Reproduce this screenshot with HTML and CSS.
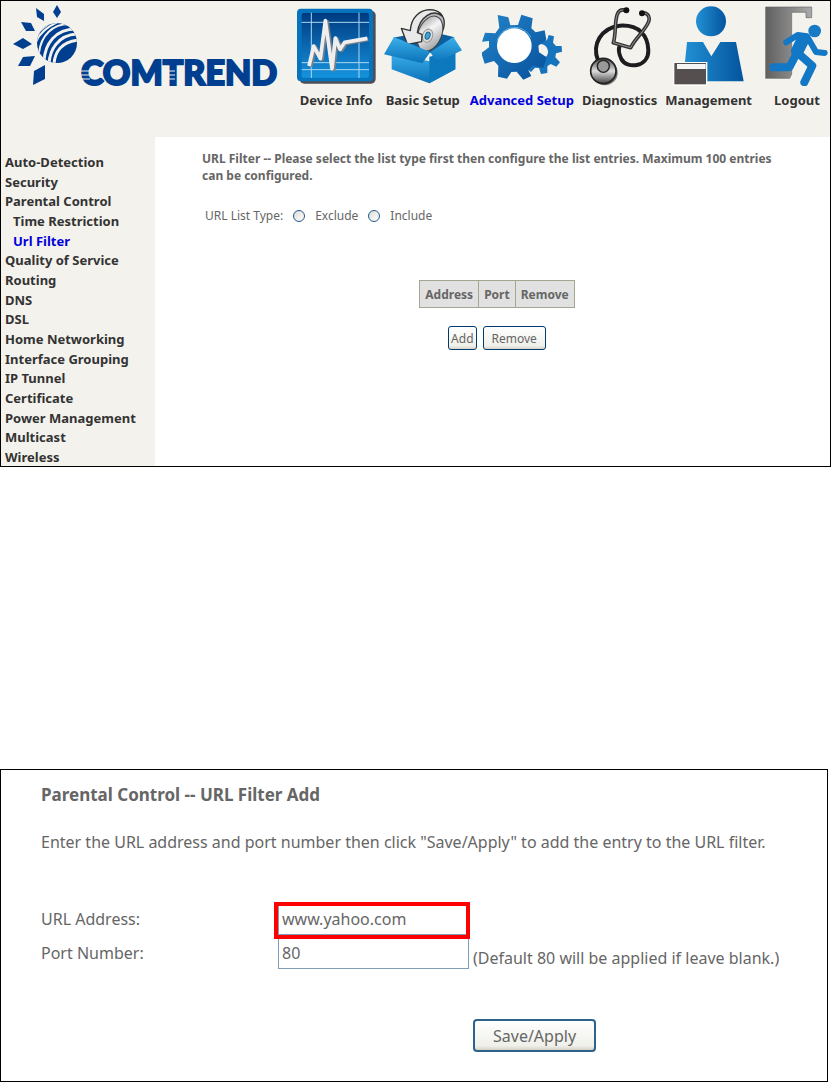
FILE: index.html
```html
<!DOCTYPE html>
<html lang="en">
<head>
    <meta charset="UTF-8">
    <meta name="viewport" content="width=device-width, initial-scale=1.0">
    <title>Comtrend - URL Filter</title>
    <link rel="stylesheet" href="styles.css">
</head>
<body>
    <div class="router">
        <header>
            <svg class="logo" viewBox="0 1 280 92" role="img" aria-label="Comtrend">
                <defs>
                    <clipPath id="globe"><circle cx="56" cy="43" r="20"/></clipPath>
                </defs>
                <g fill="#003f8f">
                    <path d="M56 5l4 7-4 6-4-6zM35 8l8 6v7l-7-4zM20 22l10 1 4 8-9 0zM12 44l10-6 9 6-9 5zM22 57l12-1-5 10H17zM33 71l11-6v14l-12 6z"/>
                    <circle cx="56" cy="43" r="20"/>
                </g>
                <g clip-path="url(#globe)" fill="none" stroke="#f4f2ed">
                    <path stroke-width="3" d="M53 66C53 52 61 41 78 40"/>
                    <path stroke-width="3" d="M48 66C48 50 57 35 76 34"/>
                    <path stroke-width="3" d="M43 61C44 44 54 29 75 29"/>
                    <path stroke-width="2" d="M38 53C40 35 52 24 68 24"/>
                    <path stroke-width="2" d="M35 42C39 32 47 26 59 21"/>
                    <path stroke-width="2" d="M34 35Q42 28 50 22"/>
                </g>
                <text class="logo-text" x="80" y="85">COMTREND</text>
                <path stroke="#f4f2ed" stroke-width="1" d="M79 71h10M79 75h10M79 79h10M167 71h7M167 75h7M167 79h7"/>
            </svg>

            <nav>
                <a href="#">
                    <svg width="79" height="80" viewBox="24 18 237 240" aria-hidden="true">
                        <defs>
                            <linearGradient id="panel" x2="0" y2="1">
                                <stop offset="0" stop-color="#003a80"/>
                                <stop offset="1" stop-color="#1593dd"/>
                            </linearGradient>
                        </defs>
                        <rect x="32" y="32" width="228" height="219" rx="14" fill="#4b4f58"/>
                        <rect x="24" y="26" width="228" height="218" rx="12" fill="#0873bd"/>
                        <rect x="38" y="39" width="202" height="194" rx="6" fill="url(#panel)"/>
                        <path stroke="#a9d8f4" stroke-width="3" d="M67 38v196M210 38v196M38 67h202M38 188h202M38 209h202"/>
                        <path fill="none" stroke="#7b8086" stroke-width="11" stroke-linejoin="round" d="M65 201l14-60 20 38 15-114 20 144 10-92 14 34 14-21 66-12"/>
                        <path fill="none" stroke="#eeeeef" stroke-width="11" stroke-linejoin="round" d="M60 198l14-60 20 38 15-114 20 144 10-92 14 34 14-21 68-12"/>
                    </svg>
                    Device Info
                </a>
                <a href="#">
                    <svg width="78" height="80" viewBox="276 18 234 240" aria-hidden="true">
                        <defs>
                            <linearGradient id="box" x2="0" y2="1">
                                <stop offset="0" stop-color="#3cb0ea"/>
                                <stop offset="1" stop-color="#0971b8"/>
                            </linearGradient>
                            <linearGradient id="disc" x2="1" y2="1">
                                <stop offset="0" stop-color="#8f9093"/>
                                <stop offset="0.4" stop-color="#f5f5f5"/>
                                <stop offset="1" stop-color="#8b8c90"/>
                            </linearGradient>
                        </defs>
                        <path fill="#0b5f9f" d="M303 113l107-20 78 19-73 48z"/>
                        <path fill="#b9babd" stroke="#333" stroke-width="4" d="M370 66C380 38 405 25 428 31 458 40 462 68 452 92L420 110 366 90z"/>
                        <ellipse cx="414" cy="101" rx="35" ry="55" fill="url(#disc)" stroke="#444" stroke-width="3" transform="rotate(22 414 101)"/>
                        <ellipse cx="407" cy="107" rx="15" ry="20" fill="#ddd" stroke="#999" stroke-width="3" transform="rotate(18 407 107)"/>
                        <ellipse cx="407" cy="107" rx="7" ry="11" fill="#3aa6dc" stroke="#1e5f8a" stroke-width="3" transform="rotate(18 407 107)"/>
                        <path fill="#e9e9ea" stroke="#333" stroke-width="4" stroke-linejoin="round" d="M450 48C424 26 383 48 376 98l14 5-1 22-43 8-18-48 27 7C357 52 384 30 413 29 432 30 445 36 450 48z"/>
                        <path fill="url(#box)" d="M299 158l113 26 78-26v50l-78 42-113-42z"/>
                        <path fill="#0c78bd" d="M412 170l78-16v54l-78 42z"/>
                        <path fill="url(#box)" d="M306 111l109 45-24 34-115-27zM484 111l-69 45 19 32 76-37z"/>
                    </svg>
                    Basic Setup
                </a>
                <a href="#" class="active">
                    <svg width="80" height="80" viewBox="60 18 240 240" aria-hidden="true">
                        <defs>
                            <linearGradient id="gear" x2="1" y2="1">
                                <stop offset="0" stop-color="#2385c9"/>
                                <stop offset="1" stop-color="#07509b"/>
                            </linearGradient>
                        </defs>
                        <path fill="#1674bd" d="M243 120l12 1 5-16 16 4-3 19 9 10 17 0 1 17-18 5-2 12 14 15-11 13-17-8-10 7v20l-19 3-6-18-12-1-12 13-14-10 8-22 14-6c22 8 40-4 43-20 1-16-12-29-29-25z"/>
                        <path fill="url(#gear)" d="M107 45l32 7 6 24 23-1 10-31 34 11-4 30 13 12 27-6 5 28-24 18 2 20 23 15-10 31-32-6-13 14 9 17-24 11-20-24-16 1-13 20-27-6 1-33-13-14-28 8-10-32 23-17v-19L60 125l9-27 31 2 12-17z"/>
                        <path fill="none" stroke="#55a9df" stroke-width="3" d="M105 122A55 55 0 0 1 207 112"/>
                        <circle cx="157" cy="137" r="52" fill="#fff"/>
                    </svg>
                    Advanced Setup
                </a>
                <a href="#">
                    <svg width="62" height="80" viewBox="382 18 186 240" aria-hidden="true">
                        <defs>
                            <linearGradient id="chest" x2="0" y2="1">
                                <stop offset="0" stop-color="#444"/>
                                <stop offset="0.5" stop-color="#ddd"/>
                                <stop offset="1" stop-color="#444"/>
                            </linearGradient>
                        </defs>
                        <path fill="none" stroke="#1d1d1f" stroke-width="12" stroke-linecap="round" d="M409 181C390 133 418 84 474 77C533 73 559 108 560 151C561 203 494 207 479 177C471 160 469 148 474 138"/>
                        <path fill="none" stroke="#333" stroke-width="11" stroke-linejoin="round" d="M491 31c-40-11-24 65-36 97l52 15c13-28 43-50 54-78 6-20-8-28-20-26"/>
                        <path fill="none" stroke="#999" stroke-width="3" stroke-linejoin="round" d="M491 31c-40-11-24 65-36 97l52 15c13-28 43-50 54-78 6-20-8-28-20-26"/>
                        <circle cx="494" cy="31" r="9" fill="#111"/>
                        <circle cx="541" cy="40" r="9" fill="#111"/>
                        <circle cx="430" cy="218" r="38" fill="#777"/>
                        <circle cx="425" cy="213" r="38" fill="url(#chest)" stroke="#222" stroke-width="5"/>
                        <circle cx="425" cy="199" r="18" fill="#999" stroke="#222" stroke-width="4"/>
                    </svg>
                    Diagnostics
                </a>
                <a href="#">
                    <svg width="71" height="80" viewBox="61 18 213 240" aria-hidden="true">
                        <defs>
                            <linearGradient id="person">
                                <stop offset="0" stop-color="#2391d5"/>
                                <stop offset="1" stop-color="#04549d"/>
                            </linearGradient>
                        </defs>
                        <circle cx="175" cy="64" r="45" fill="url(#person)"/>
                        <path fill="url(#person)" d="M103 126h48l25 43 27-43h47l23 118H91z"/>
                        <path fill="#fff" d="M62 186h102v71H62z"/>
                        <path fill="#55504f" d="M65 189h95v64H65z"/>
                        <path fill="#f5f5f5" d="M73 192h86v15H73z"/>
                    </svg>
                    Management
                </a>
                <a href="#" class="logout">
                    <svg width="64" height="80" viewBox="344 18 192 240" aria-hidden="true">
                        <defs>
                            <linearGradient id="door">
                                <stop offset="0" stop-color="#606060"/>
                                <stop offset="1" stop-color="#aaa"/>
                            </linearGradient>
                        </defs>
                        <path fill="url(#door)" stroke="#666" stroke-width="2" d="M346 21h138v32h-17V37h-43v185l-6 13h-72z"/>
                        <g fill="none" stroke="#1277c4" stroke-linecap="round" stroke-linejoin="round">
                            <path stroke-width="18" d="M408 127l34-22 28 4 27 47 26 3"/>
                            <path stroke-width="38" d="M458 119l-17 34"/>
                            <path stroke-width="24" d="M437 164l-20 38h-48M446 162l40 35-24 50"/>
                        </g>
                        <circle cx="493" cy="93" r="19" fill="#167ac4"/>
                    </svg>
                    Logout
                </a>
            </nav>
        </header>

        <div class="columns">
            <ul class="sidebar">
                <li><a href="#">Auto-Detection</a></li>
                <li><a href="#">Security</a></li>
                <li><a href="#">Parental Control</a></li>
                <li class="sub"><a href="#">Time Restriction</a></li>
                <li class="sub"><a href="#" class="active">Url Filter</a></li>
                <li><a href="#">Quality of Service</a></li>
                <li><a href="#">Routing</a></li>
                <li><a href="#">DNS</a></li>
                <li><a href="#">DSL</a></li>
                <li><a href="#">Home Networking</a></li>
                <li><a href="#">Interface Grouping</a></li>
                <li><a href="#">IP Tunnel</a></li>
                <li><a href="#">Certificate</a></li>
                <li><a href="#">Power Management</a></li>
                <li><a href="#">Multicast</a></li>
                <li><a href="#">Wireless</a></li>
            </ul>

            <main>
                <h1>URL Filter -- Please select the list type first then configure the list entries. Maximum 100 entries can be configured.</h1>

                <div class="list-type" role="radiogroup" aria-labelledby="listTypeLabel">
                    <span id="listTypeLabel">URL List Type:</span>
                    <label><input type="radio" name="listType" value="exclude"> Exclude</label>
                    <label><input type="radio" name="listType" value="include"> Include</label>
                </div>

                <table>
                    <tr>
                        <th>Address</th>
                        <th>Port</th>
                        <th>Remove</th>
                    </tr>
                </table>

                <div class="buttons-container">
                    <button type="button" class="add">Add</button>
                    <button type="button">Remove</button>
                </div>
            </main>
        </div>
    </div>

    <form class="add-form">
        <h2>Parental Control -- URL Filter Add</h2>
        <p>Enter the URL address and port number then click "Save/Apply" to add the entry to the URL filter.</p>

        <div class="fields">
            <label for="urlAddress">URL Address:</label>
            <div class="field highlight"><input type="text" id="urlAddress" value="www.yahoo.com"></div>
            <label for="portNumber">Port Number:</label>
            <div class="field"><input type="text" id="portNumber" value="80"></div>
            <span class="hint">(Default 80 will be applied if leave blank.)</span>
            <button type="button" class="save">Save/Apply</button>
        </div>
    </form>
</body>
</html>
```

FILE: styles.css
```css
* {
    box-sizing: border-box;
}
body {
    background-color: #fff;
    color: #666;
    font-family: "Noto Sans", Tahoma, sans-serif;
    font-size: 12px;
    margin: 0;
}
a {
    color: #333;
    text-decoration: none;
}
a.active {
    color: #0000dd;
}
.router {
    border: 1px solid #000;
}

/* Header */
header {
    display: flex;
    justify-content: space-between;
    height: 136px;
    background-color: #f4f2ed;
}
.logo {
    flex: none;
    width: 280px;
    height: 92px;
}
.logo-text {
    font-family: Lato, sans-serif;
    font-size: 34px;
    font-weight: 900;
    fill: #003f8f;
    stroke: #003f8f;
    stroke-width: 2px;
}
nav {
    display: flex;
    gap: 8px;
    padding: 5px 1px 0 0;
    font-size: 13px;
    font-weight: bold;
    line-height: 18px;
}
nav a {
    display: flex;
    flex-direction: column;
    align-items: center;
    gap: 5px;
    white-space: nowrap;
}
.logout {
    margin-left: 5px;
}

/* Menu and content */
.columns {
    display: flex;
    min-height: 329px;
}
.sidebar {
    display: flex;
    flex: none;
    flex-direction: column;
    justify-content: space-between;
    width: 154px;
    margin: 0;
    padding: 16px 0 0 4px;
    background-color: #f4f2ed;
    font-size: 13px;
    font-weight: bold;
    line-height: 18px;
    list-style: none;
}
.sub {
    padding-left: 8px;
}
main {
    flex: 1;
    padding: 13px 38px 0 47px;
}
h1 {
    margin: 0 0 23px;
    font-size: 12px;
    font-weight: bold;
    line-height: 17px;
}
.list-type {
    display: flex;
    align-items: center;
    gap: 10px;
    padding-left: 3px;
    line-height: 18px;
}
.list-type label {
    display: flex;
    align-items: center;
    gap: 10px;
}
input[type="radio"] {
    appearance: none;
    width: 12px;
    height: 12px;
    margin: 0;
    border: 1px solid #21598c;
    border-radius: 50%;
    background: linear-gradient(135deg, #dcdcd7, #fff);
}
input[type="radio"]:checked {
    background: radial-gradient(#21a121 35%, #fff 40%);
}
table {
    margin: 55px auto 18px;
    border-collapse: collapse;
    background-color: #e1e1e1;
}
th {
    height: 27px;
    padding: 0 5px;
    border: 1px solid #a5a591;
    font-weight: bold;
}
button {
    height: 24px;
    padding: 0 8px;
    border: 1px solid #003c74;
    border-radius: 3px;
    background: linear-gradient(#fff, #f0f0ea 85%, #d8d3c7);
    color: #666;
    font-family: inherit;
    font-size: 12px;
    cursor: pointer;
}
.add {
    padding: 0 2px;
}
.buttons-container {
    display: flex;
    justify-content: center;
    gap: 6px;
}

/* URL filter add form */
.add-form {
    margin: 302px 3px 0 0;
    padding: 14px 40px 29px;
    border: 1px solid #000;
    font-size: 16px;
    line-height: 22px;
}
.add-form h2 {
    margin: 0 0 25px;
    font-size: 17px;
    font-weight: bold;
}
.add-form p {
    margin: 0 0 49px;
}
.fields {
    display: grid;
    grid-template-columns: 233px 191px 1fr;
    column-gap: 4px;
    row-gap: 1px;
    align-items: center;
}
.field {
    position: relative;
}
.field input {
    display: block;
    width: 100%;
    height: 33px;
    padding: 0 3px;
    border: 1px solid #7f9db9;
    color: #666;
    font-family: inherit;
    font-size: 16px;
}
.highlight {
    z-index: 1;
    grid-column: 2 / 4;
    width: 191px;
}
.highlight::after {
    content: "";
    position: absolute;
    inset: 0 -1px -4px -4px;
    border: 4px solid #ff0000;
    pointer-events: none;
}
.hint {
    align-self: end;
}
.save {
    grid-column: 3;
    justify-self: start;
    height: 33px;
    margin-top: 49px;
    padding: 0 18px;
    border-width: 2px;
    border-color: #2c628b;
    border-radius: 4px;
    font-size: 16px;
}
```
